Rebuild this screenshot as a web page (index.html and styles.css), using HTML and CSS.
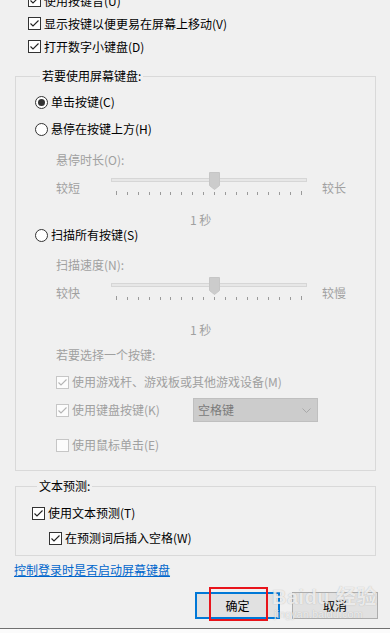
FILE: index.html
```html
<!DOCTYPE html>
<html lang="zh-CN">
<head>
<meta charset="utf-8">
<title>屏幕键盘选项</title>
<link rel="stylesheet" href="styles.css">
</head>
<body>
<div class="page">
  <div class="top">
    <div class="row cbrow"><span class="cb"><svg viewBox="0 0 11 11" width="11" height="11"><path d="M1.5 5.5 L4 8 L9.5 2.5" /></svg></span>使用按键音(U)</div>
    <div class="row cbrow"><span class="cb"><svg viewBox="0 0 11 11" width="11" height="11"><path d="M1.5 5.5 L4 8 L9.5 2.5" /></svg></span>显示按键以便更易在屏幕上移动(V)</div>
    <div class="row cbrow"><span class="cb"><svg viewBox="0 0 11 11" width="11" height="11"><path d="M1.5 5.5 L4 8 L9.5 2.5" /></svg></span>打开数字小键盘(D)</div>
  </div>

  <fieldset class="group g1">
    <legend>若要使用屏幕键盘:</legend>
    <div class="row radio r1"><span class="rd on"></span>单击按键(C)</div>
    <div class="row radio r2"><span class="rd"></span>悬停在按键上方(H)</div>
    <div class="row sub dim lab1">悬停时长(O):</div>
    <div class="slider s1">
      <span class="sl-lab dim">较短</span>
      <div class="track-area">
        <div class="track"></div>
        <div class="thumb"><svg viewBox="0 0 11 18" width="11" height="18"><path d="M0.5 0.5 H10.5 V13.5 L5.5 17.5 L0.5 13.5 Z" /></svg></div>
        <div class="ticks"><i class="long"></i><i></i><i></i><i></i><i></i><i></i><i></i><i></i><i></i><i></i><i></i><i></i><i></i><i></i><i></i><i></i><i></i><i class="long"></i></div>
      </div>
      <span class="sl-lab right dim">较长</span>
    </div>
    <div class="sec dim sec1">1 秒</div>
    <div class="row radio r3"><span class="rd"></span>扫描所有按键(S)</div>
    <div class="row sub dim lab2">扫描速度(N):</div>
    <div class="slider s2">
      <span class="sl-lab dim">较快</span>
      <div class="track-area">
        <div class="track"></div>
        <div class="thumb"><svg viewBox="0 0 11 18" width="11" height="18"><path d="M0.5 0.5 H10.5 V13.5 L5.5 17.5 L0.5 13.5 Z" /></svg></div>
        <div class="ticks"><i class="long"></i><i></i><i></i><i></i><i></i><i></i><i></i><i></i><i></i><i></i><i></i><i></i><i></i><i></i><i></i><i></i><i></i><i class="long"></i></div>
      </div>
      <span class="sl-lab right dim">较慢</span>
    </div>
    <div class="sec dim sec2">1 秒</div>
    <div class="row sub dim lab3">若要选择一个按键:</div>
    <div class="row sub dim cbM"><span class="cb dis"><svg viewBox="0 0 11 11" width="11" height="11"><path d="M1.5 5.5 L4 8 L9.5 2.5" /></svg></span>使用游戏杆、游戏板或其他游戏设备(M)</div>
    <div class="row sub dim cbK">
      <span class="kl"><span class="cb dis"><svg viewBox="0 0 11 11" width="11" height="11"><path d="M1.5 5.5 L4 8 L9.5 2.5" /></svg></span>使用键盘按键(K)</span>
      <span class="dropdown"><span class="dd-text">空格键</span><svg class="chev" viewBox="0 0 9 5" width="9" height="5"><path d="M0.5 0.5 L4.5 4.5 L8.5 0.5" /></svg></span>
    </div>
    <div class="row sub dim cbE"><span class="cb dis"></span>使用鼠标单击(E)</div>
  </fieldset>

  <fieldset class="group g2">
    <legend>文本预测:</legend>
    <div class="row cbrow cbT"><span class="cb"><svg viewBox="0 0 11 11" width="11" height="11"><path d="M1.5 5.5 L4 8 L9.5 2.5" /></svg></span>使用文本预测(T)</div>
    <div class="row cbrow cbW"><span class="cb"><svg viewBox="0 0 11 11" width="11" height="11"><path d="M1.5 5.5 L4 8 L9.5 2.5" /></svg></span>在预测词后插入空格(W)</div>
  </fieldset>

  <div class="row linkrow"><a class="link" href="#">控制登录时是否启动屏幕键盘</a></div>

  <div class="buttons">
    <div class="btn ok">确定<span class="mark"></span></div>
    <div class="btn cancel">取消</div>
    <div class="watermark"><span class="wm1">Bai<span class="paw">du</span> 经验</span><span class="wm2">jingyan.baidu.com</span></div>
  </div>

  <div class="bottombar"></div>
</div>
</body>
</html>
```

FILE: styles.css
```css
html, body {
  margin: 0;
  padding: 0;
  background: #f0f0f0;
  overflow: hidden;
}
body {
  font-family: "Noto Sans CJK SC", "Microsoft YaHei", "Noto Sans", sans-serif;
  font-size: 12px;
  color: #000;
  width: 390px;
  height: 633px;
}
.page {
  display: flex;
  flex-direction: column;
  width: 390px;
  height: 633px;
}
.row {
  display: flex;
  align-items: center;
  height: 16px;
  line-height: 16px;
  white-space: nowrap;
}
.dim { color: #a0a0a0; }

/* checkboxes */
.cb {
  box-sizing: border-box;
  width: 13px;
  height: 13px;
  border: 1px solid #333;
  background: #fff;
  display: inline-flex;
  flex-shrink: 0;
  margin-right: 3px;
}
.cb svg path {
  fill: none;
  stroke: #222;
  stroke-width: 1.1;
}
.cb.dis {
  border-color: #c6c6c6;
  background: #fcfcfc;
}
.cb.dis svg path { stroke: #b4b4b4; }

/* radios */
.rd {
  box-sizing: border-box;
  width: 13px;
  height: 13px;
  border: 1px solid #333;
  border-radius: 50%;
  background: #fff;
  display: inline-flex;
  align-items: center;
  justify-content: center;
  margin-right: 3px;
  flex-shrink: 0;
}
.rd.on::after {
  content: "";
  width: 7px;
  height: 7px;
  border-radius: 50%;
  background: #333;
}

/* top checkboxes */
.top {
  margin-top: -11px;
  padding-left: 28px;
  display: flex;
  flex-direction: column;
}
.top .row { height: 23px; }

/* group boxes */
.group {
  box-sizing: border-box;
  margin: 0 0 0 15px;
  width: 361px;
  padding: 0;
  border: 1px solid #d9d9d9;
  min-width: 0;
}
.group legend {
  margin-left: 5px;
  padding: 0 2px;
  line-height: 16px;
  height: 16px;
  font-size: 12px;
}
.g1 {
  margin-top: 10px;
  padding: 0 0 17px 19px;
}
.r1 { margin-top: 10px; }
.r2 { margin-top: 11px; }
.sub { margin-left: 21px; }
.lab1 { margin-top: 15px; }

.slider {
  display: flex;
  height: 30px;
  margin-left: 21px;
}
.s1 { margin-top: 2px; }
.s2 { margin-top: 2px; }
.sl-lab {
  width: 55px;
  flex-shrink: 0;
  padding-top: 10px;
  line-height: 16px;
}
.sl-lab.right {
  width: auto;
  margin-left: 15px;
}
.track-area {
  position: relative;
  width: 196px;
  height: 30px;
  flex-shrink: 0;
}
.track {
  box-sizing: border-box;
  margin-top: 8px;
  height: 4px;
  border: 1px solid #d6d6d6;
  background: #e7e7e7;
}
.thumb {
  position: absolute;
  left: 98px;
  top: 2px;
  width: 11px;
  height: 18px;
}
.thumb svg path {
  fill: #cccccc;
  stroke: #c6c6c6;
  stroke-width: 1;
}
.ticks {
  display: flex;
  justify-content: space-between;
  align-items: flex-start;
  margin: 9px 5px 0 5px;
  height: 5px;
}
.ticks i {
  display: block;
  width: 1px;
  height: 3px;
  margin-top: 1px;
  background: #9a9a9a;
}
.ticks i.long {
  height: 4px;
  margin-top: 0;
}

.sec {
  height: 14px;
  line-height: 14px;
  padding-left: 155px;
  white-space: nowrap;
}
.sec1 { margin-top: 13px; }
.r3 { margin-top: 0; }
.lab2 { margin-top: 14px; }
.sec2 { margin-top: 18px; }
.lab3 { margin-top: 10px; }
.cbM { margin-top: 11px; }
.cbK {
  margin-top: 8px;
  height: 24px;
}
.kl {
  display: flex;
  align-items: center;
  width: 137px;
  flex-shrink: 0;
}
.dropdown {
  box-sizing: border-box;
  width: 125px;
  height: 24px;
  background: #cccccc;
  border: 1px solid #bfbfbf;
  display: flex;
  align-items: center;
  justify-content: space-between;
  padding: 0 6px 0 4px;
  color: #7a7a7a;
}
.chev path {
  fill: none;
  stroke: #a8a8a8;
  stroke-width: 1;
}
.cbE { margin-top: 15px; }

/* group 2 */
.g2 {
  margin-top: 7px;
  padding: 0 0 9px 16px;
}
.cbT { margin-top: 11px; }
.cbW { margin-top: 9px; margin-left: 17px; }

.linkrow {
  margin-top: 6px;
  padding-left: 14px;
}
.link {
  color: #0066cc;
  text-decoration: underline;
}

/* buttons */
.buttons {
  position: relative;
  display: flex;
  gap: 12px;
  margin-top: 14px;
  padding-left: 195px;
  height: 27px;
}
.btn {
  box-sizing: border-box;
  height: 27px;
  background: #e1e1e1;
  display: flex;
  align-items: center;
  justify-content: center;
  position: relative;
}
.ok {
  width: 85px;
  border: 2px solid #0078d7;
}
.cancel {
  width: 86px;
  border: 1px solid #adadad;
}
.mark {
  position: absolute;
  left: 12px;
  top: -7px;
  width: 59px;
  height: 34px;
  border: 2px solid #e8141b;
  box-sizing: border-box;
}
.watermark {
  position: absolute;
  left: 272px;
  top: -6px;
  display: flex;
  flex-direction: column;
  align-items: flex-start;
  pointer-events: none;
  color: rgba(255, 255, 255, 0.75);
  text-shadow: 0 0 1px rgba(120, 120, 120, 0.55);
  font-family: "Liberation Sans", "Noto Sans CJK SC", sans-serif;
  white-space: nowrap;
}
.wm1 {
  font-size: 20px;
  line-height: 22px;
  font-weight: bold;
  letter-spacing: 0.5px;
}
.wm2 {
  font-size: 11px;
  line-height: 12px;
  margin-left: 2px;
}

.bottombar {
  margin-top: 9px;
  flex: 1;
  border-top: 1px solid #707070;
  background: #fbfbfb;
}
```
